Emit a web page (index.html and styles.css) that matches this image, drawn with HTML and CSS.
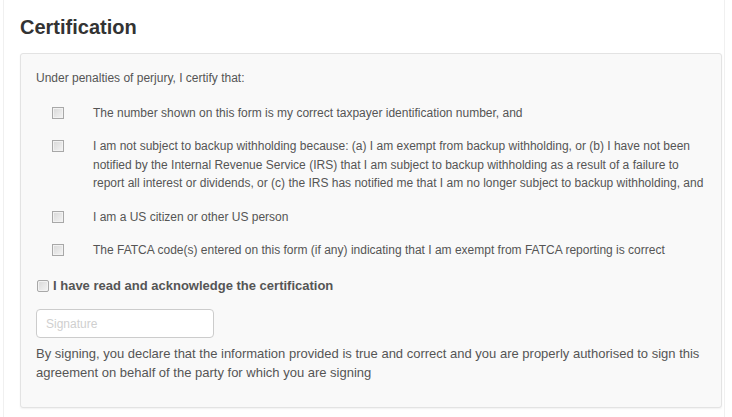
FILE: index.html
```html
<!DOCTYPE html>
<html>
<head>
<meta charset="utf-8">
<link rel="stylesheet" href="styles.css">
</head>
<body>
<div class="page">
  <h2 class="title">Certification</h2>
  <div class="well">
    <p class="intro">Under penalties of perjury, I certify that:</p>
    <ul class="items">
      <li class="item"><span class="cb"></span><span class="item-text">The number shown on this form is my correct taxpayer identification number, and</span></li>
      <li class="item"><span class="cb"></span><span class="item-text">I am not subject to backup withholding because: (a) I am exempt from backup withholding, or (b) I have not been notified by the Internal Revenue Service (IRS) that I am subject to backup withholding as a result of a failure to report all interest or dividends, or (c) the IRS has notified me that I am no longer subject to backup withholding, and</span></li>
      <li class="item"><span class="cb"></span><span class="item-text">I am a US citizen or other US person</span></li>
      <li class="item"><span class="cb"></span><span class="item-text">The FATCA code(s) entered on this form (if any) indicating that I am exempt from FATCA reporting is correct</span></li>
    </ul>
    <label class="ack"><span class="cb"></span>I have read and acknowledge the certification</label>
    <input class="sig" type="text" placeholder="Signature">
    <p class="desc">By signing, you declare that the information provided is true and correct and you are properly authorised to sign this agreement on behalf of the party for which you are signing</p>
  </div>
</div>
</body>
</html>
```

FILE: styles.css
```css
html, body {
  margin: 0;
  padding: 0;
  background: #ffffff;
}
body {
  font-family: "Liberation Sans", Arial, sans-serif;
  color: #555555;
  font-size: 12px;
}
.page {
  margin: 0 7px 0 3px;
  padding: 0 2px 8px 16px;
  border-left: 1px solid #f0f0f0;
  border-right: 1px solid #f0f0f0;
  min-height: 409px;
}
.title {
  margin: 0;
  padding: 15px 0 14px 0;
  font-size: 20px;
  line-height: 24px;
  font-weight: bold;
  color: #333333;
}
.well {
  background: #f9f9f9;
  border: 1px solid #e3e3e3;
  border-radius: 3px;
  box-shadow: 0 1px 2px rgba(0,0,0,0.06);
  padding: 15px 15px 25px 15px;
}
.intro {
  margin: 0 0 9px 0;
  line-height: 18px;
  font-size: 12px;
}
.items {
  list-style: none;
  margin: 0;
  padding: 0;
}
.item {
  display: grid;
  grid-template-columns: 57px 1fr;
  padding: 7.5px 0;
  line-height: 18.5px;
}
.item .cb {
  margin: 3px 0 0 16px;
}
.cb {
  display: inline-block;
  box-sizing: border-box;
  width: 12px;
  height: 12px;
  border: 1px solid #a8a8a8;
  background: linear-gradient(135deg, #d8d8d8 0%, #f4f4f4 100%);
  box-shadow: inset 0 0 0 1px #f2f2f2;
}
.ack {
  display: flex;
  align-items: center;
  gap: 4px;
  margin: 10px 0 0 1px;
  line-height: 18px;
  font-weight: bold;
  font-size: 13px;
  color: #555555;
}
.ack .cb {
  border-radius: 2px;
}
.sig {
  display: block;
  box-sizing: border-box;
  margin: 14px 0 0 0;
  width: 178px;
  height: 29px;
  padding: 0 9px;
  border: 1px solid #cccccc;
  border-radius: 4px;
  background: #ffffff;
  font-family: "Liberation Sans", Arial, sans-serif;
  font-size: 12px;
  color: #555555;
}
.sig::placeholder {
  color: #cfcfcf;
}
.desc {
  margin: 6px 0 0 0;
  line-height: 19px;
  font-size: 13px;
}
```
